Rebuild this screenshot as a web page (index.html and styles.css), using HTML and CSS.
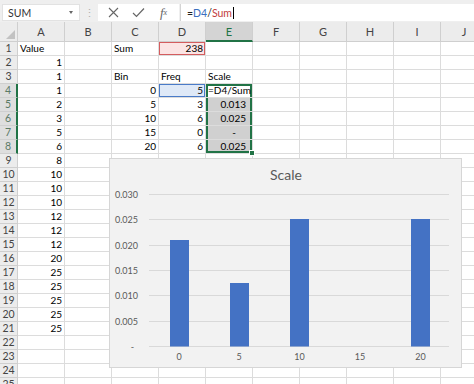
FILE: index.html
```html
<!DOCTYPE html>
<html lang="en">
<head>
  <meta charset="UTF-8">
  <title>Scale - Excel</title>
  <link rel="stylesheet" href="styles.css">
</head>
<body>

  <!-- Name box and formula bar -->
  <div class="toolbar">
    <div class="name-box"><span>SUM</span><span class="caret"></span></div>
    <div class="grip">&#8942;</div>
    <div class="actions">
      <span class="action">
        <svg width="11" height="11" viewBox="0 0 11 11"><path d="M1 1 L10 10 M10 1 L1 10" stroke="#666" stroke-width="1.1" fill="none"/></svg>
      </span>
      <span class="action">
        <svg width="13" height="11" viewBox="0 0 13 11"><path d="M1 6 L4.5 9.5 L12 1.5" stroke="#666" stroke-width="1.2" fill="none"/></svg>
      </span>
      <span class="action fx">f<sub>x</sub></span>
    </div>
    <div class="formula">=<span class="ref-blue">D4</span>/<span class="ref-red">Sum</span><span class="cursor"></span></div>
  </div>

  <!-- Worksheet grid (filled in below) -->
  <div class="sheet" id="sheet"></div>

  <!-- Chart floating over the sheet -->
  <div class="chart">
    <svg width="351" height="208" viewBox="0 0 351 208">
      <text x="176" y="21" class="chart-title" text-anchor="middle">Scale</text>

      <g class="grid">
        <line x1="39" y1="35.5" x2="339" y2="35.5"/>
        <line x1="39" y1="60.5" x2="339" y2="60.5"/>
        <line x1="39" y1="86.5" x2="339" y2="86.5"/>
        <line x1="39" y1="111.5" x2="339" y2="111.5"/>
        <line x1="39" y1="136.5" x2="339" y2="136.5"/>
        <line x1="39" y1="162.5" x2="339" y2="162.5"/>
        <line x1="39" y1="187.5" x2="339" y2="187.5"/>
      </g>

      <g class="axis-label" text-anchor="end">
        <text x="28" y="38.5">0.030</text>
        <text x="28" y="63.5">0.025</text>
        <text x="28" y="89.5">0.020</text>
        <text x="28" y="114.5">0.015</text>
        <text x="28" y="139.5">0.010</text>
        <text x="28" y="165.5">0.005</text>
        <text x="24" y="190.5">-</text>
      </g>

      <g class="bars">
        <rect x="60" y="81" width="19" height="106.5"/>
        <rect x="120" y="124" width="19" height="63.5"/>
        <rect x="180" y="60" width="19" height="127.5"/>
        <rect x="301" y="60" width="19" height="127.5"/>
      </g>

      <g class="axis-label" text-anchor="middle">
        <text x="69" y="201">0</text>
        <text x="129" y="201">5</text>
        <text x="189.5" y="201">10</text>
        <text x="250" y="201">15</text>
        <text x="310.5" y="201">20</text>
      </g>
    </svg>
  </div>

  <script>
    // Column letters and the values typed into the sheet
    var cols = ["A", "B", "C", "D", "E", "F", "G", "H", "I", "J"];
    var values = {
      A1: "Value", C1: "Sum", D1: "238",
      C3: "Bin", D3: "Freq", E3: "Scale",
      C4: "0", D4: "5", E4: "=D4/Sum",
      C5: "5", D5: "3", E5: "0.013",
      C6: "10", D6: "6", E6: "0.025",
      C7: "15", D7: "0", E7: "-",
      C8: "20", D8: "6", E8: "0.025"
    };
    var columnA = [1, 1, 1, 2, 3, 5, 6, 8, 10, 10, 10, 12, 12, 12, 20, 25, 25, 25, 25, 25];
    columnA.forEach(function(v, i) {
      values["A" + (i + 2)] = String(v);
    });

    // Cells that are text (left aligned) and cells with extra styling
    var textCells = ["A1", "C1", "C3", "D3", "E3", "E4"];
    var extra = {
      D1: "ref-sum",
      D4: "ref-d4",
      E4: "sel-top",
      E5: "sel-mid acct",
      E6: "sel-mid acct",
      E7: "sel-mid acct dash",
      E8: "sel-bottom acct"
    };

    var sheet = document.getElementById("sheet");

    function addCell(className, text) {
      var div = document.createElement("div");
      div.className = className;
      div.textContent = text;
      sheet.appendChild(div);
    }

    addCell("corner", "");
    cols.forEach(function(c) {
      addCell(c === "E" ? "col-head active" : "col-head", c);
    });

    for (var r = 1; r <= 25; r++) {
      addCell(r >= 4 && r <= 8 ? "row-head active" : "row-head", r);
      cols.forEach(function(c) {
        var id = c + r;
        var cls = "cell";
        if (textCells.indexOf(id) !== -1) cls += " text";
        if (extra[id]) cls += " " + extra[id];
        addCell(cls, values[id] || "");
      });
    }
  </script>
</body>
</html>
```

FILE: styles.css
```css
body {
  margin: 0;
  width: 474px;
  height: 384px;
  overflow: hidden;
  position: relative;
  background-color: #fff;
  font-family: "Lato", "Liberation Sans", sans-serif;
  color: #000;
}

/* Formula bar */
.toolbar {
  display: flex;
  height: 22px;
  padding: 4px 0 1px 0;
  box-sizing: border-box;
  background-color: #efefef;
}
.name-box {
  display: flex;
  align-items: center;
  justify-content: space-between;
  width: 78px;
  margin-left: 2px;
  padding: 0 6px 0 5px;
  box-sizing: border-box;
  background-color: #fff;
  border: 1px solid #e2e2e2;
  font-size: 10.5px;
  color: #333;
}
.caret {
  width: 0;
  height: 0;
  border-left: 2.5px solid transparent;
  border-right: 2.5px solid transparent;
  border-top: 3px solid #666;
}
.grip {
  width: 18px;
  text-align: center;
  font-size: 11px;
  line-height: 17px;
  color: #b0b0b0;
}
.actions {
  display: flex;
  align-items: center;
  width: 81px;
  padding-left: 3px;
  box-sizing: border-box;
  background-color: #fff;
}
.action {
  display: flex;
  align-items: center;
  justify-content: center;
  width: 25px;
}
.fx {
  font-family: "Liberation Serif", serif;
  font-style: italic;
  font-size: 13px;
  color: #666;
}
.fx sub {
  font-size: 8px;
}
.formula {
  flex: 1;
  display: flex;
  align-items: center;
  margin-left: 1px;
  padding-left: 6px;
  background-color: #fff;
  border-left: 1px solid #d4d4d4;
  font-size: 10.5px;
  color: #222;
}
.formula .ref-blue {
  color: #3b6fc0;
}
.formula .ref-red {
  color: #c23b3b;
}
.cursor {
  width: 1px;
  height: 12px;
  margin-left: 1px;
  background-color: #000;
}

/* Worksheet */
.sheet {
  display: grid;
  grid-template-columns: 18px repeat(10, 47px);
  grid-template-rows: 20px;
  grid-auto-rows: 14px;
}
.corner,
.col-head,
.row-head {
  background-color: #ececec;
  border-right: 1px solid #cfcfcf;
  border-bottom: 1px solid #cfcfcf;
  box-sizing: border-box;
  color: #444;
  text-align: center;
}
.corner {
  position: relative;
}
.corner::after {
  content: "";
  position: absolute;
  right: 2px;
  bottom: 2px;
  border-left: 9px solid transparent;
  border-bottom: 9px solid #c2c2c2;
}
.col-head {
  font-size: 11px;
  line-height: 19px;
}
.col-head.active {
  background-color: #d4d4d4;
  color: #217346;
  border-bottom: 2px solid #217346;
}
.row-head {
  font-size: 10.5px;
  line-height: 13px;
}
.row-head.active {
  background-color: #dedede;
  color: #5b7a66;
  border-right: 2px solid #217346;
}
.cell {
  position: relative;
  padding: 0 2px;
  box-sizing: border-box;
  border-right: 1px solid #dcdcdc;
  border-bottom: 1px solid #dcdcdc;
  font-size: 10px;
  line-height: 13px;
  text-align: right;
  white-space: nowrap;
  overflow: hidden;
}
.cell.text {
  text-align: left;
}
.ref-sum {
  background-color: #fbe4e4;
  box-shadow: inset 0 0 0 1px #d45c5e;
}
.ref-d4 {
  background-color: #dfe9f7;
  box-shadow: inset 0 0 0 1px #4a7bc8;
}
.sel-top {
  box-shadow: inset 2px 0 0 #217346, inset -2px 0 0 #217346, inset 0 2px 0 #217346;
}
.sel-mid {
  background-color: #d0d0d0;
  box-shadow: inset 2px 0 0 #217346, inset -2px 0 0 #217346;
}
.sel-bottom {
  background-color: #d0d0d0;
  box-shadow: inset 2px 0 0 #217346, inset -2px 0 0 #217346, inset 0 -2px 0 #217346;
  overflow: visible;
  z-index: 2;
}
.sel-bottom::after {
  content: "";
  position: absolute;
  right: -3px;
  bottom: -3px;
  width: 4px;
  height: 4px;
  background-color: #217346;
  border: 1px solid #fff;
}
.acct {
  padding-right: 6px;
}
.acct.dash {
  padding-right: 16px;
}

/* Chart */
.chart {
  position: absolute;
  left: 109px;
  top: 158px;
  width: 351px;
  height: 208px;
  background-color: #f2f2f2;
  border: 1px solid #d6d6d6;
  z-index: 5;
}
.chart svg {
  display: block;
}
.chart-title {
  font-family: "Lato", "Liberation Sans", sans-serif;
  font-size: 14px;
  fill: #595959;
}
.grid line {
  stroke: #d9d9d9;
  stroke-width: 1;
}
.axis-label {
  font-family: "Lato", "Liberation Sans", sans-serif;
  font-size: 9px;
  fill: #595959;
}
.bars rect {
  fill: #4472c4;
}
```
